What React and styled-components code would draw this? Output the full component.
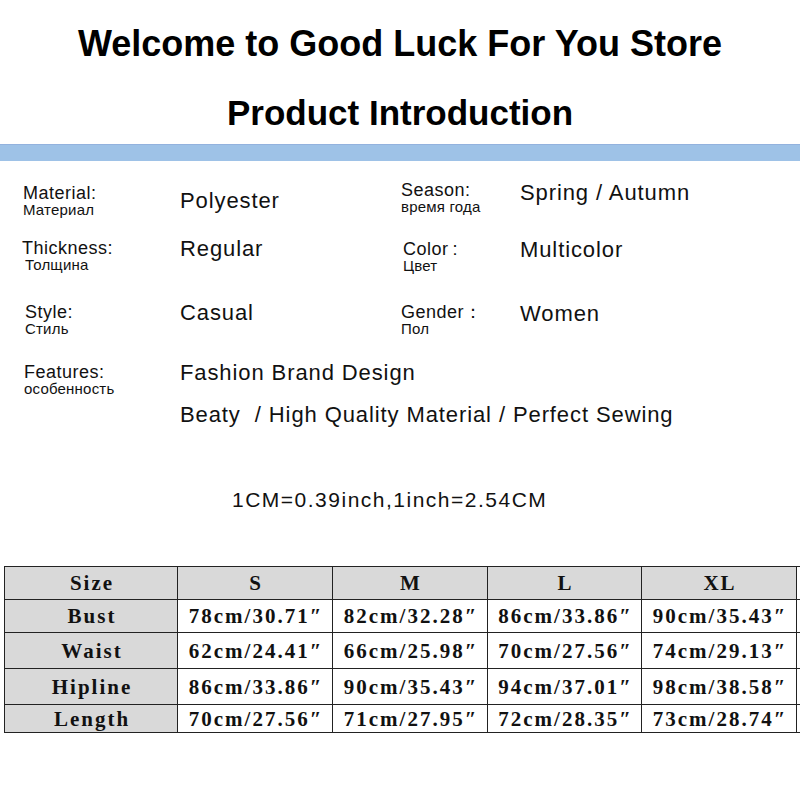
import React from 'react';
import styled, { createGlobalStyle } from 'styled-components';

const GlobalStyle = createGlobalStyle`
  html, body {
    margin: 0;
    padding: 0;
    background: #fff;
    overflow: hidden;
  }
  body {
    font-family: 'Liberation Sans', Arial, sans-serif;
    color: #000;
  }
`;

const Page = styled.div`
  width: 800px;
  height: 800px;
  overflow: hidden;
  background: #fff;
`;

const Header = styled.header`
  padding-top: 26px;
  text-align: center;
`;

const Title = styled.h1`
  margin: 0;
  font-size: ${({ $size }) => $size}px;
  line-height: ${({ $size }) => $size}px;
  font-weight: 700;
  margin-top: ${({ $mt }) => $mt || 0}px;
`;

const Bar = styled.div`
  margin-top: 14px;
  height: 16px;
  background: #9ec2e7;
  border-top: 1px solid #93b2de;
`;

const Specs = styled.section`
  padding: 20px 0 0 23px;
`;

const Row = styled.div`
  display: grid;
  grid-template-columns: 157px 221px 119px 1fr;
  align-items: start;
  height: ${({ $h }) => ($h ? `${$h}px` : 'auto')};
`;

const Label = styled.div`
  margin-top: ${({ $dy }) => $dy || 0}px;
  margin-left: ${({ $dx }) => $dx || 0}px;
  color: #111;
`;

const En = styled.div`
  font-size: 18px;
  line-height: 18px;
  letter-spacing: 0.5px;
`;

const Ru = styled.div`
  font-size: 15px;
  line-height: 15px;
  letter-spacing: 0.2px;
  margin-left: ${({ $dx }) => $dx || 0}px;
`;

const Value = styled.div`
  margin-top: ${({ $dy }) => $dy || 0}px;
  font-size: 22px;
  line-height: 24px;
  letter-spacing: 0.9px;
  color: #111;
  white-space: pre;
`;

const Gap = styled.span`
  display: inline-block;
  width: ${({ $w }) => $w}px;
`;

const Note = styled.div`
  margin-top: 61px;
  padding-left: 232px;
  font-size: 21px;
  line-height: 24px;
  letter-spacing: 1.5px;
  color: #111;
`;

const TableWrap = styled.div`
  margin-top: 54px;
  padding-left: 4px;
`;

const SizeTable = styled.table`
  border-collapse: collapse;
  table-layout: fixed;
  width: 820px;
  font-family: 'Liberation Serif', 'DejaVu Serif', serif;
  font-weight: 700;
  font-size: 21px;
  letter-spacing: 2px;
  color: #111;
`;

const Cell = styled.td`
  border: 1px solid #222;
  padding: 0 0 0 2px;
  text-align: center;
  vertical-align: middle;
  white-space: nowrap;
  line-height: 22px;
  background: ${({ $gray }) => ($gray ? '#d9d9d9' : '#fff')};
  height: ${({ $h }) => $h}px;
`;

const specRows = [
  {
    h: 56,
    cells: [
      { en: 'Material:', ru: 'Материал', dy: 3, value: 'Polyester', vdy: 8 },
      { en: 'Season:', ru: 'время года', dy: 0, value: 'Spring / Autumn', vdy: 0 },
    ],
  },
  {
    h: 64,
    cells: [
      { en: 'Thickness:', ru: 'Толщина', dy: 2, dx: -1, rdx: 3, value: 'Regular', vdy: 0 },
      { en: 'Color\u2009:', ru: 'Цвет', dy: 3, dx: 2, value: 'Multicolor', vdy: 1 },
    ],
  },
  {
    h: 60,
    cells: [
      { en: 'Style:', ru: 'Стиль', dy: 2, dx: 2, value: 'Casual', vdy: 0 },
      { en: 'Gender\uff1a', ru: 'Пол', dy: 2, value: 'Women', vdy: 1 },
    ],
  },
];

const columns = ['Size', 'S', 'M', 'L', 'XL', ''];
const widths = [173, 155, 155, 154, 155, 28];

const sizeRows = [
  { name: 'Bust', h: 32, values: ['78cm/30.71″', '82cm/32.28″', '86cm/33.86″', '90cm/35.43″'] },
  { name: 'Waist', h: 35, values: ['62cm/24.41″', '66cm/25.98″', '70cm/27.56″', '74cm/29.13″'] },
  { name: 'Hipline', h: 35, values: ['86cm/33.86″', '90cm/35.43″', '94cm/37.01″', '98cm/38.58″'] },
  { name: 'Length', h: 27, values: ['70cm/27.56″', '71cm/27.95″', '72cm/28.35″', '73cm/28.74″'] },
];

const App = () => (
  <Page>
    <GlobalStyle />
    <Header>
      <Title $size={36}>Welcome to Good Luck For You Store</Title>
      <Title as="h2" $size={35} $mt={33}>Product Introduction</Title>
    </Header>
    <Bar />

    <Specs>
      {specRows.map((row, i) => (
        <Row key={i} $h={row.h}>
          {row.cells.map((c) => (
            <React.Fragment key={c.en}>
              <Label $dy={c.dy} $dx={c.dx}>
                <En>{c.en}</En>
                <Ru $dx={c.rdx}>{c.ru}</Ru>
              </Label>
              <Value $dy={c.vdy}>{c.value}</Value>
            </React.Fragment>
          ))}
        </Row>
      ))}
      <Row>
        <Label $dy={2} $dx={1}>
          <En>Features:</En>
          <Ru>особенность</Ru>
        </Label>
        <div style={{ gridColumn: '2 / span 3' }}>
          <Value>Fashion Brand Design</Value>
          <Value $dy={18}>
            Beaty
            <Gap $w={7} />
            {' / High Quality Material / Perfect Sewing'}
          </Value>
        </div>
      </Row>
    </Specs>

    <Note>1CM=0.39inch,1inch=2.54CM</Note>

    <TableWrap>
      <SizeTable>
        <colgroup>
          {widths.map((w, i) => (
            <col key={i} style={{ width: w }} />
          ))}
        </colgroup>
        <tbody>
          <tr>
            {columns.map((c, i) => (
              <Cell key={i} $gray={i < 5} $h={32}>
                {c}
              </Cell>
            ))}
          </tr>
          {sizeRows.map((r) => (
            <tr key={r.name}>
              <Cell $gray $h={r.h}>
                {r.name}
              </Cell>
              {r.values.map((v, i) => (
                <Cell key={i} $h={r.h}>
                  {v}
                </Cell>
              ))}
              <Cell $h={r.h} />
            </tr>
          ))}
        </tbody>
      </SizeTable>
    </TableWrap>
  </Page>
);

export default App;
